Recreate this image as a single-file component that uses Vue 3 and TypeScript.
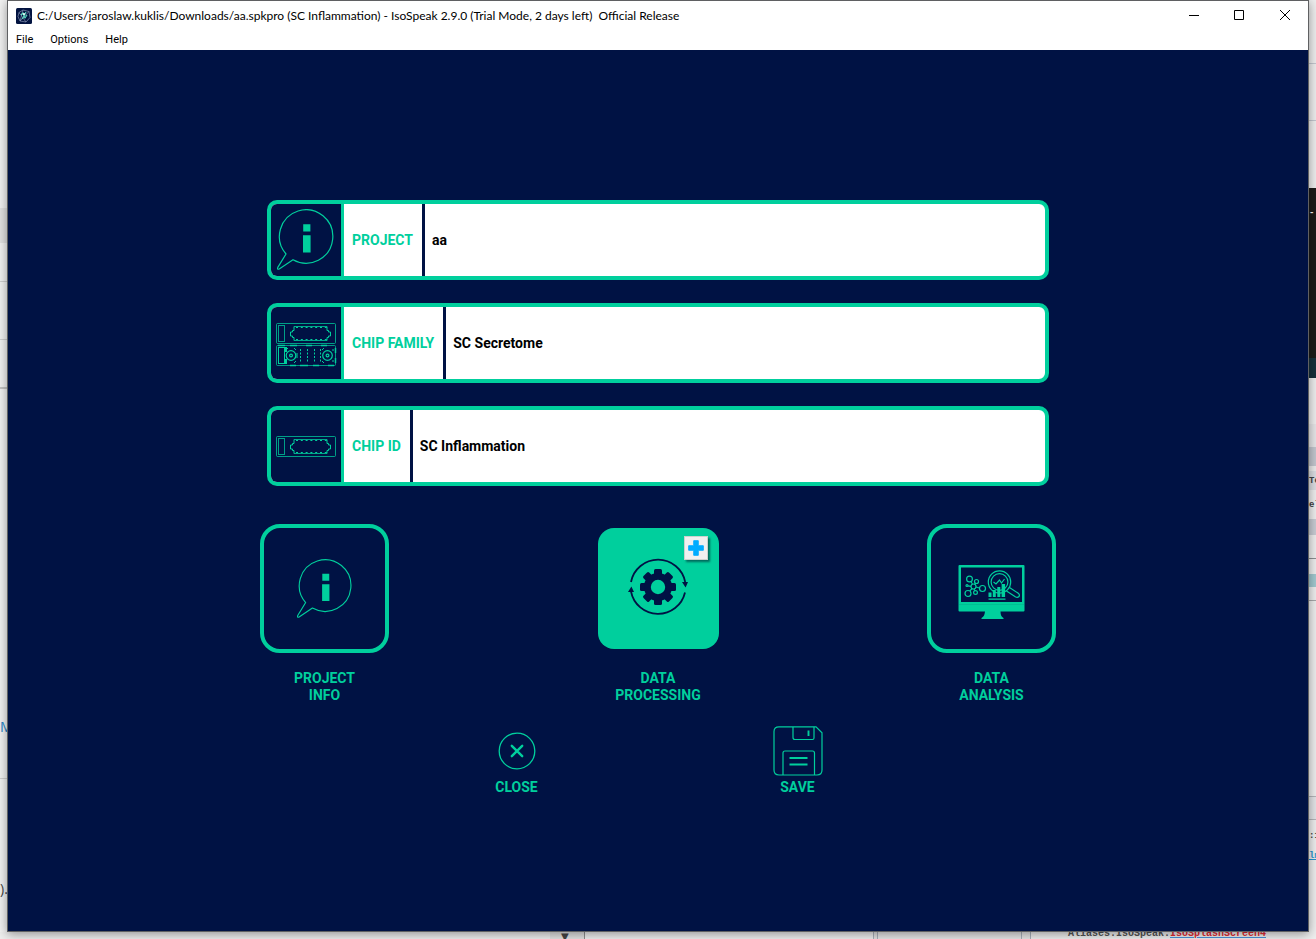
<script setup lang="ts">
import { ref } from 'vue'

interface Field {
  id: string
  label: string
  value: string
  icon: 'info' | 'family' | 'chip'
}

const title =
  'C:/Users/jaroslaw.kuklis/Downloads/aa.spkpro (SC Inflammation) - IsoSpeak 2.9.0 (Trial Mode, 2 days left)  Official Release'

const menus = ['File', 'Options', 'Help']

const fields = ref<Field[]>([
  { id: 'project', label: 'PROJECT', value: 'aa', icon: 'info' },
  { id: 'chip-family', label: 'CHIP FAMILY', value: 'SC Secretome', icon: 'family' },
  { id: 'chip-id', label: 'CHIP ID', value: 'SC Inflammation', icon: 'chip' },
])

const gearTeeth = [0, 45, 90, 135, 180, 225, 270, 315]
const wellColumns = [24, 31, 38, 44]
</script>

<template>
  <div class="desktop">
    <svg class="defs" width="0" height="0" aria-hidden="true">
      <symbol id="bubble" viewBox="0 0 60 62">
        <path
          d="M10 45A26.7 26.7 0 1 1 17 50.7L3.2 60Q1 60.8 1.8 58.4Z"
          fill="none"
          stroke="#00cf9d"
          stroke-width="1.2"
          stroke-linejoin="round"
        />
        <path d="M27.2 15.2h7.2v7.2h-7.2zM27 26.2h7.6v17.2H27z" fill="#00cf9d" />
      </symbol>
      <symbol id="chip" viewBox="0 0 61 21">
        <g fill="none" stroke="#00cf9d">
          <rect x=".5" y=".5" width="59" height="20" rx="1" stroke-opacity=".75" />
          <rect x="2.5" y="2.5" width="6" height="16" stroke-opacity=".75" />
          <path d="M18 3.500v4h-1.500v1.500h-2v4h2v1.500H18v3M51 3.500v4h1.500v1.500h2v4h-2v1.500H51v3" />
          <path d="M18 3.500h33M18 17.500h33" stroke-opacity=".8" />
          <path d="M20 4.500h31M20 16.500h31" stroke-dasharray="2 2.800" />
        </g>
      </symbol>
    </svg>

    <div class="strip strip-left" aria-hidden="true">
      <span class="peek-link">M</span>
      <span class="peek-end">).</span>
    </div>

    <section class="window">
      <header class="titlebar">
        <svg class="app-icon" viewBox="0 0 16 16" aria-hidden="true">
          <rect width="16" height="16" rx="1.5" fill="#021340" />
          <g fill="none" stroke="#9aa6c4" stroke-width=".6">
            <path d="M3 4.5 7 2l6 1.500 1 6-4 4.500-6-1L2 8.500Z" />
            <path d="M3 4.500 10 14M13 3.500 4 13M7 2l-3 11" />
          </g>
          <path d="m5 7 2-2 1 3 2-4M6 11l2-3 1 2 2-3" fill="none" stroke="#5de0c4" stroke-width="1.100" />
          <circle cx="8" cy="6" r="1" fill="#fff" />
        </svg>
        <h1 class="title">{{ title }}</h1>
        <div class="controls">
          <button type="button" aria-label="Minimize">
            <svg viewBox="0 0 10 10"><path d="M1 5.500h10" /></svg>
          </button>
          <button type="button" aria-label="Maximize">
            <svg viewBox="0 0 10 10"><path d="M.5.5h9v9h-9z" /></svg>
          </button>
          <button type="button" aria-label="Close window">
            <svg viewBox="0 0 10 10"><path d="m0 0 10 10M10 0 0 10" /></svg>
          </button>
        </div>
      </header>

      <nav class="menubar">
        <button v-for="menu in menus" :key="menu" type="button">{{ menu }}</button>
      </nav>

      <main class="content">
        <form class="fields" @submit.prevent>
          <div v-for="field in fields" :key="field.id" class="field">
            <div class="field-icon">
              <svg v-if="field.icon === 'info'" class="bubble-large"><use href="#bubble" /></svg>
              <svg v-else-if="field.icon === 'chip'" class="chip-single"><use href="#chip" /></svg>
              <svg v-else class="chip-double" viewBox="0 0 61 44">
                <use href="#chip" width="61" height="21" />
                <g transform="translate(0 22)" fill="none" stroke="#00cf9d">
                  <rect x=".5" y=".5" width="59" height="20" rx="1" stroke-opacity=".7" />
                  <path d="M2 .5h7M14 .5h7M30 .5h6M45 .5h6M14 20.500h6M24 20.500h8M37 20.500h6M52 20.500h6" stroke-width="1.500" />
                  <path d="M59.500 3v5M59.500 13v5" stroke-width="1.500" />
                  <rect x="2.500" y="2.500" width="6" height="16" />
                  <path d="M10 2v5M10 14v5" stroke-width="2" />
                  <circle cx="15" cy="10.500" r="4.800" stroke-width="1.200" />
                  <circle cx="15" cy="10.500" r="1.400" stroke-width="1.200" />
                  <circle cx="51.500" cy="10.500" r="4.800" stroke-width="1.200" />
                  <circle cx="51.500" cy="10.500" r="1.400" stroke-width="1.200" />
                  <path d="m10 5 2-2M18 3l2 2M18 18l2-2M46 5l2-2M46 16l2 2M57 4v2M57 15v2M21 8v5" />
                  <path
                    v-for="x in wellColumns"
                    :key="x"
                    :d="`M${x + 0.5} 4v14`"
                    stroke-dasharray="2 1.500"
                  />
                </g>
              </svg>
            </div>
            <label :for="field.id">{{ field.label }}</label>
            <input :id="field.id" v-model="field.value" type="text" />
          </div>
        </form>

        <div class="tiles">
          <button type="button" class="tile">
            <span class="tile-box">
              <svg class="bubble-small"><use href="#bubble" /></svg>
            </span>
            <span class="tile-label">PROJECT<br />INFO</span>
          </button>

          <button type="button" class="tile">
            <span class="tile-box tile-filled">
              <svg class="gear" viewBox="0 0 62 60">
                <g fill="#001244">
                  <g transform="translate(31 30)">
                    <rect
                      v-for="angle in gearTeeth"
                      :key="angle"
                      x="-4"
                      y="-18"
                      width="8"
                      height="9"
                      rx="1.500"
                      :transform="`rotate(${angle})`"
                    />
                    <circle r="10.600" fill="none" stroke="#001244" stroke-width="6.800" />
                  </g>
                  <path d="M55 25h6l-2.400 5.500ZM1 35h6l-2.600-5.500Z" />
                </g>
                <path
                  d="M4 25A27.600 27.600 0 0 1 58.200 25M58 35.500A27.600 27.600 0 0 1 4 34.500"
                  fill="none"
                  stroke="#001244"
                  stroke-width="1.800"
                />
              </svg>
              <svg class="badge" viewBox="0 0 24 24">
                <path d="M9.500 4h5v5.500H20v5h-5.500V20h-5v-5.500H4v-5h5.500z" fill="#00acff" stroke="#00acff" stroke-linejoin="round" />
              </svg>
            </span>
            <span class="tile-label">DATA<br />PROCESSING</span>
          </button>

          <button type="button" class="tile">
            <span class="tile-box">
              <svg class="monitor" viewBox="0 0 67 55">
                <path
                  fill="#00cf9d"
                  fill-rule="evenodd"
                  d="M1.500 0h64a1 1 0 0 1 1 1v44.500a1 1 0 0 1-1 1h-23q0 5 3 6.500v1H23.500v-1q3-1.500 3.500-6.500H1.500a1 1 0 0 1-1-1V1a1 1 0 0 1 1-1ZM3 2.500V37h61V2.500Z"
                />
                <path d="M1 39.500h65" stroke="#00b28f" stroke-width=".6" />
                <g fill="none" stroke="#00cf9d" stroke-width="1.200">
                  <circle cx="15.500" cy="21.500" r="2.500" />
                  <circle cx="11.500" cy="14" r="2.900" />
                  <circle cx="18.500" cy="16.500" r="2" />
                  <circle cx="24.500" cy="23.500" r="3" />
                  <circle cx="10" cy="28.500" r="3" />
                  <circle cx="17.500" cy="27.500" r="1.900" />
                  <circle cx="9" cy="20.500" r="1" />
                  <path d="m14.500 19-1.700-2.500M16.500 19.500l1-1.500M18 22l3.500 1M14 23.500l-2.200 2.600M16 24l.8 1.700M13 21.300l-3-.5" />
                  <circle cx="41.500" cy="17" r="11.200" />
                  <circle cx="41.500" cy="17" r="8.400" />
                  <path d="m51.500 22.500 8.800 5.800q2 1.700.5 3.500-1.500 1.200-3.500 0L48.500 26" />
                  <path d="m35.500 17 2.500 2 3.500-4 2 3 3-4" />
                </g>
                <path
                  d="M30.500 27.500h3V32h-3zM34.800 25h3v7h-3zM39.300 22h3v10h-3zM43.600 19h3.500v13h-3.500zM30.500 33.500h17v1.300h-17z"
                  fill="#00cf9d"
                />
              </svg>
            </span>
            <span class="tile-label">DATA<br />ANALYSIS</span>
          </button>
        </div>

        <div class="actions">
          <button type="button" class="action">
            <svg viewBox="0 0 50 50" fill="none" stroke="#00cf9d">
              <circle cx="25" cy="25" r="17.800" stroke-width="1.300" />
              <path d="m19.800 19.800 10.400 10.400M30.200 19.800 19.800 30.200" stroke-width="2.400" stroke-linecap="round" />
            </svg>
            <span>CLOSE</span>
          </button>
          <button type="button" class="action">
            <svg viewBox="0 0 50 50" fill="none" stroke="#00cf9d">
              <path
                d="M6 .8h37l6 6V44q0 5-5 5H6q-5 0-5-5V5.500Q1 .8 6 .8Z"
                stroke-width="1.200"
              />
              <path d="M20 1v10.500q0 2 2 2h17.500q1.500 0 1.500-1.500V1M10 49V27q0-2 2-2h27.500q2 0 2 2v22" stroke-width="1.200" />
              <path d="M35.500 4.500V10M16.500 32h18M16.500 38.500h18" stroke-width="1.900" />
            </svg>
            <span>SAVE</span>
          </button>
        </div>
      </main>
    </section>

    <div class="strip strip-right" aria-hidden="true">
      <span class="peek-dot">-</span>
      <span class="peek-te">Te</span>
      <span class="peek-el">el</span>
      <span class="peek-one">:1</span>
      <span class="peek-im">lm</span>
    </div>

    <div class="strip-bottom" aria-hidden="true">
      <span class="arrow">▼</span>
      <span class="code">Aliases.IsoSpeak.<em>IsoSplashScreen4</em></span>
    </div>
  </div>
</template>

<style>
body {
  margin: 0;
}
</style>

<style scoped>
.desktop {
  display: grid;
  grid-template-columns: 7px minmax(0, 1fr) 7px;
  grid-template-rows: minmax(0, 1fr) 7px;
  min-height: 100vh;
  overflow: hidden;
  background: #efefef;
  font-family: Roboto, 'Liberation Sans', sans-serif;
}

.defs {
  position: absolute;
}

button {
  margin: 0;
  padding: 0;
  border: 0;
  background: none;
  color: inherit;
  font: inherit;
}

svg {
  display: block;
}

/* Window frame */
.window {
  position: relative;
  z-index: 1;
  display: flex;
  flex-direction: column;
  border: 1px solid #5f6062;
  background: #001244;
  box-shadow: 0 2px 10px rgba(0, 0, 0, 0.4);
}

.titlebar {
  display: flex;
  align-items: center;
  height: 29px;
  padding-left: 8px;
  background: #fff;
}

.app-icon {
  flex: none;
  width: 16px;
  height: 16px;
}

.title {
  flex: 1;
  margin: 0 0 0 5px;
  overflow: hidden;
  color: #000;
  font: 400 12px/16px Lato, 'Open Sans', sans-serif;
  white-space: pre;
}

.controls {
  display: flex;
  align-self: flex-start;
}

.controls button {
  display: grid;
  place-items: center;
  width: 46px;
  height: 28px;
}

.controls svg {
  width: 10px;
  height: 10px;
  fill: none;
  stroke: #000;
  stroke-width: 1;
  overflow: visible;
}

.menubar {
  display: flex;
  gap: 17px;
  height: 20px;
  padding-left: 8px;
  background: #fff;
  color: #000;
  font-size: 11px;
  line-height: 20px;
}

.content {
  display: flex;
  flex: 1;
  flex-direction: column;
  align-items: center;
  padding: 150px 16px 0;
  color: #00cf9d;
  font-size: 14px;
  font-weight: 700;
  line-height: 17px;
}

/* Project fields */
.fields {
  display: flex;
  flex-direction: column;
  gap: 23px;
  width: 100%;
  max-width: 782px;
}

.field {
  display: flex;
  box-sizing: border-box;
  height: 80px;
  overflow: hidden;
  border: 4px solid #00cf9d;
  border-radius: 10px;
  background: #fff;
}

.field-icon {
  display: grid;
  flex: none;
  place-items: center;
  width: 70px;
  border-right: 3px solid #00cf9d;
  background: #001244;
}

.bubble-large {
  width: 60px;
  height: 62px;
}

.bubble-small {
  width: 58px;
  height: 60px;
}

.chip-single {
  width: 61px;
  height: 21px;
}

.chip-double {
  width: 61px;
  height: 44px;
  margin-top: 3px;
}

.field label {
  display: flex;
  flex: none;
  align-items: center;
  padding: 0 9px 0 8px;
  border-right: 3px solid #001244;
}

.field input {
  flex: 1;
  min-width: 0;
  padding: 0 7px;
  border: 0;
  outline: 0;
  background: none;
  color: #000;
  font: inherit;
}

/* Main tiles */
.tiles {
  display: flex;
  justify-content: space-between;
  width: 100%;
  max-width: 796px;
  margin-top: 38px;
}

.tile {
  display: flex;
  flex-direction: column;
  align-items: center;
  gap: 17px;
}

.tile-box {
  position: relative;
  display: grid;
  box-sizing: border-box;
  place-items: center;
  width: 129px;
  height: 129px;
  border: 4px solid #00cf9d;
  border-radius: 20px;
}

.tile-filled {
  width: 121px;
  height: 121px;
  margin: 4px;
  border: 0;
  border-radius: 16px;
  background: #00cf9d;
}

.gear {
  width: 62px;
  height: 60px;
  margin-bottom: 3px;
}

.badge {
  position: absolute;
  top: 8px;
  right: 11px;
  box-sizing: border-box;
  width: 24px;
  height: 24px;
  border: 1px solid #ccd2cf;
  background: #f0f0f0;
  box-shadow: 2px 2px 2px rgba(0, 40, 50, 0.6);
}

.monitor {
  width: 67px;
  height: 55px;
  margin-top: 7px;
}

/* Bottom actions */
.actions {
  display: flex;
  gap: 231px;
  margin-top: 22px;
  padding-right: 2px;
}

.action {
  display: flex;
  flex-direction: column;
  align-items: center;
  gap: 3px;
  width: 50px;
}

.action svg {
  width: 50px;
  height: 50px;
}

/* Slivers of the windows behind */
.strip {
  display: flex;
  flex-direction: column;
  overflow: hidden;
  font: 400 14px/18px 'Open Sans', sans-serif;
  white-space: nowrap;
}

.strip-left {
  background: linear-gradient(
    #f2f2f2 208px, #e2e2e2 208px 243px, #f2f2f2 243px 281px, #d0d0d0 281px 282px,
    #f2f2f2 282px 339px, #d0d0d0 339px 340px, #f2f2f2 340px 387px, #c4c4c4 387px 389px,
    #f2f2f2 389px 778px, #d0d0d0 778px 779px, #f2f2f2 779px
  );
}

.peek-link {
  margin-top: 718px;
  color: #2483c5;
}

.peek-end {
  margin-top: 144px;
  color: #444;
}

.strip-right {
  background: linear-gradient(
    #efefef 63px, #c4c8d0 63px 64px, #efefef 64px 120px, #c4c8d0 120px 121px,
    #efefef 121px 188px, #1c1c1a 188px 358px, #17313c 358px 378px, #efefef 378px 424px,
    #e6e6e8 424px 447px, #c3c7cf 447px 466px, #ececec 466px 471px, #dcdee3 471px 490px,
    #efefef 490px 519px, #c8ccd4 519px 535px, #efefef 535px 558px, #8d8f92 558px 559px,
    #efefef 559px 574px, #a2c9d0 574px 587px, #efefef 587px 600px, #a9a9ab 600px 601px,
    #efefef 601px 796px, #b4b6ba 796px 797px, #e4e5e8 797px 819px, #b4b6ba 819px 820px,
    #efefef 820px
  );
  color: #444;
  font: 700 9px/12px 'Liberation Mono', monospace;
}

.peek-dot {
  margin-top: 207px;
  color: #fff;
}

.peek-te {
  margin-top: 256px;
}

.peek-el {
  margin-top: 12px;
}

.peek-one {
  margin-top: 319px;
}

.peek-im {
  margin-top: 8px;
  color: #2494d0;
  text-decoration: underline;
}

.strip-bottom {
  display: flex;
  grid-column: 1 / -1;
  justify-content: space-between;
  height: 7px;
  padding: 0 50px 0 561px;
  overflow: hidden;
  background: linear-gradient(
    90deg, #eee 550px, #e2e2e2 550px 584px, #8f8f8f 584px 585px, #efefef 585px 873px,
    #a8b0ba 873px 874px, #e2e2e2 874px 877px, #a8b0ba 877px 878px, #e6e6e6 878px 1021px,
    #a8b0ba 1021px 1022px, #e6e6e6 1022px 1030px, #a8b0ba 1030px 1031px, #efefef 1031px
  );
}

.arrow {
  color: #444;
  font: 400 10px/10px 'DejaVu Sans', sans-serif;
}

.code {
  margin-top: -4px;
  color: #555;
  font: 700 10px/12px 'Liberation Mono', monospace;
}

.code em {
  color: #e32c35;
  font-style: normal;
  text-decoration: underline #4a90d8;
}
</style>
